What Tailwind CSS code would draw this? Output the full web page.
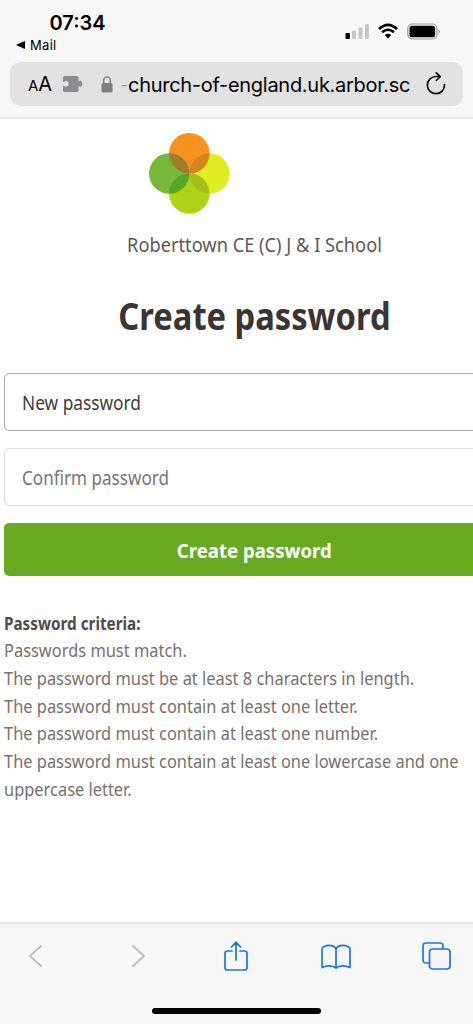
<!DOCTYPE html>
<html lang="en">
<head>
    <meta charset="UTF-8">
    <meta name="viewport" content="width=device-width, initial-scale=1.0">
    <title>Create password</title>
    <script src="https://cdn.jsdelivr.net/npm/@tailwindcss/browser@4"></script>
</head>
<body class="bg-white overflow-hidden">
    <div class="w-[473px] h-[1024px] flex flex-col overflow-hidden font-['Noto_Sans','Open_Sans',sans-serif]">
        <!-- Status bar and address bar -->
        <header class="h-[119px] shrink-0 bg-[#f7f7f7] border-b-2 border-[#e8e8e8] font-[Inter,sans-serif] text-black">
            <div class="h-[62px] flex justify-between pr-[32px]">
                <div class="pl-[16px] pt-[11px]">
                    <div class="pl-[33.5px] text-[20px] leading-[24px] font-semibold whitespace-nowrap">07:34</div>
                    <div class="flex items-center gap-[5px] mt-[2px] text-[13px] leading-[16px]">
                        <svg class="w-[9px] h-[8px]" viewBox="0 0 9 8"><path d="M0 4L9 0v8z" fill="#000"/></svg>
                        <span class="whitespace-nowrap tracking-[0.3px]">Mail</span>
                    </div>
                </div>
                <div class="flex items-start pt-[23px]">
                    <svg class="w-[25px] h-[17px]" viewBox="0 0 25 17">
                        <rect x="0.5" y="10" width="4.5" height="6" rx="1.3" fill="#000"/>
                        <rect x="7" y="7.5" width="4" height="8.5" rx="1.3" fill="#c6c6c6"/>
                        <rect x="13.5" y="4.5" width="4" height="11.5" rx="1.3" fill="#c6c6c6"/>
                        <rect x="20" y="1" width="4" height="15" rx="1.3" fill="#c6c6c6"/>
                    </svg>
                    <svg class="w-[20px] h-[16px] ml-[8px]" viewBox="0 0 20 16" fill="none" stroke="#000" stroke-width="2.6">
                        <path d="M1 6Q10 -2.4 19 6"/>
                        <path d="M4 9.3Q10 4.2 16 9.3"/>
                        <path d="M6.8 12Q10 9.5 13.2 12L10 15.5z" fill="#000" stroke="none"/>
                    </svg>
                    <svg class="w-[34px] h-[17px] ml-[9px]" viewBox="0 0 34 17">
                        <rect x="0.8" y="1" width="29" height="15" rx="4.5" fill="none" stroke="#9a9a9a" stroke-width="1.2"/>
                        <rect x="2.5" y="2.7" width="25.6" height="11.6" rx="2.6" fill="#000"/>
                        <path d="M31.3 6v5c2-.8 2-4.2 0-5z" fill="#a0a0a0"/>
                    </svg>
                </div>
            </div>
            <div class="mx-[10px] h-[44px] rounded-[11px] bg-[#e2e2e3] flex items-center pl-[18px] pr-[17px]">
                <div class="w-[24px] flex items-baseline leading-none whitespace-nowrap"><span class="text-[15px]">A</span><span class="text-[20px]">A</span></div>
                <svg class="w-[20px] h-[16px] ml-[11px] shrink-0" viewBox="0 0 20 16" fill="#8b8b8d">
                    <path d="M1.5 0H14q1.5 0 1.5 1.5V5.3h.8c1.2-1.2 3-.4 3 2.5s-1.8 3.6-3 2.5h-.8V14.5q0 1.5-1.5 1.5H1.5Q0 16 0 14.5V9.700h.8c.8 0 1 1 2.3 1 1.5 0 2.5-1.2 2.5-2.9S4.6 5 3.100 5c-1.3 0-1.5 1-2.3 1H0V1.5Q0 0 1.5 0z"/>
                </svg>
                <svg class="w-[12px] h-[17px] ml-[18px] shrink-0" viewBox="0 0 12 17">
                    <path d="M2.7 8V4.5a3.3 3.6 0 0 1 6.6 0V8" fill="none" stroke="#7f7f81" stroke-width="1.4"/>
                    <rect x="0.5" y="7" width="11" height="9.5" rx="1.5" fill="#7f7f81"/>
                </svg>
                <span class="ml-[8px] w-[7px] text-[#8e8e90] text-[14px]">-</span>
                <span class="w-[289px] text-[20px] leading-[28px] pt-px tracking-[-0.28px] whitespace-nowrap">church-of-england.uk.arbor.sc</span>
                <svg class="w-[20px] h-[24px] ml-auto shrink-0" viewBox="0 0 20 24" fill="none" stroke="#111" stroke-width="1.7" stroke-linecap="round" stroke-linejoin="round">
                    <path d="M18.5 12.5A8.6 8.6 0 1 1 10 4.500h4"/>
                    <path d="M10.300 .9L14.300 4.600L10.300 8.500"/>
                </svg>
            </div>
        </header>

        <!-- The form is wider than the screen and runs off the right edge -->
        <main class="w-[505px] grow pl-[4px] pt-[13px]">
            <svg class="w-[82px] h-[82px] ml-[144px]" viewBox="0 0 82 82">
                <circle cx="61.3" cy="41.5" r="20.3" fill="#dded21"/>
                <circle cx="41.3" cy="61.5" r="20.3" fill="#afd217"/>
                <circle cx="41.3" cy="21.3" r="20.3" fill="#f7921e"/>
                <circle cx="21.3" cy="41.5" r="20.3" fill="#76b83a"/>
                <path d="M41.3 41.5A20.3 20.3 0 0 1 21.3 21.3A20.3 20.3 0 0 1 41.3 41.5z" fill="#a47c2a"/>
                <path d="M41.3 41.5A20.3 20.3 0 0 1 61.3 21.3A20.3 20.3 0 0 1 41.3 41.5z" fill="#d5841c"/>
                <path d="M41.3 41.5A20.3 20.3 0 0 1 21.3 61.5A20.3 20.3 0 0 1 41.3 41.5z" fill="#5aa526"/>
                <path d="M41.3 41.5A20.3 20.3 0 0 1 61.3 61.5A20.3 20.3 0 0 1 41.3 41.5z" fill="#a4bf17"/>
            </svg>
            <p class="mt-[17px] text-center text-[19px] leading-[28px] scale-x-[0.96] text-[#5c5856]">Roberttown CE (C) J &amp; I School</p>
            <h1 class="mt-[31px] text-center text-[38px] leading-[50px] font-bold scale-x-[0.86] text-[#3a3533]">Create password</h1>
            <form>
                <div class="mt-[33px] h-[58px] flex items-center rounded-[5px] border border-[#a9a9a9] pl-[17px] pt-[3px] text-[19px] text-[#3f3b39]"><span class="origin-left scale-x-[0.91]">New password</span></div>
                <div class="mt-[17px] h-[58px] flex items-center rounded-[5px] border border-[#dedede] pl-[17px] pt-[3px] text-[19px] text-[#7b7573]"><span class="origin-left scale-x-[0.9]">Confirm password</span></div>
                <button type="button" class="mt-[17px] w-full h-[53px] block rounded-[5px] bg-[#69aa23] text-white text-[20px] font-bold"><span class="inline-block pt-[3px] scale-x-[0.93]">Create password</span></button>
            </form>
            <div class="mt-[33.500px] w-[490px] text-[17.5px] leading-[27.7px] text-[#78716e] whitespace-nowrap origin-left scale-x-[0.938]">
                <p class="font-bold text-[#504b49] origin-left scale-x-[0.93]">Password criteria:</p>
                <p>Passwords must match.</p>
                <p>The password must be at least 8 characters in length.</p>
                <p>The password must contain at least one letter.</p>
                <p>The password must contain at least one number.</p>
                <p>The password must contain at least one lowercase and one<br>uppercase letter.</p>
            </div>
        </main>

        <!-- Browser toolbar -->
        <footer class="h-[102px] shrink-0 bg-[#f7f7f7] border-t-2 border-[#e8e8e8]">
            <div class="h-[64px] flex items-center pl-[28px]">
                <svg class="w-[15px] h-[24px]" viewBox="0 0 15 24" fill="none" stroke="#bdbdbd" stroke-width="1.9" stroke-linecap="round" stroke-linejoin="round"><path d="M13 2L2 12L13 22"/></svg>
                <svg class="w-[15px] h-[24px] ml-[88px]" viewBox="0 0 15 24" fill="none" stroke="#bdbdbd" stroke-width="1.9" stroke-linecap="round" stroke-linejoin="round"><path d="M2 2L13 12L2 22"/></svg>
                <svg class="w-[24px] h-[30px] ml-[78px] mb-[1px]" viewBox="0 0 24 30" fill="none" stroke="#1677e8" stroke-width="1.7" stroke-linecap="round" stroke-linejoin="round"><path d="M8 10H3.5Q1 10 1 12.5V26.5Q1 29 3.5 29H20.5Q23 29 23 26.5V12.5Q23 10 20.5 10H16M12 19V1.5M7.500 6L12 1.2L16.5 6"/></svg>
                <svg class="w-[30px] h-[25px] ml-[73px]" viewBox="0 0 30 25" fill="none" stroke="#1677e8" stroke-width="1.7" stroke-linecap="round" stroke-linejoin="round"><path d="M15 4.5V24C12 21.3 5 21 1 23.5V4.5C4 .5 12 .2 15 4.5C18 .2 26 .5 29 4.5V23.5C25 21 18 21.3 15 24"/></svg>
                <svg class="w-[29px] h-[28px] ml-[71px]" viewBox="0 0 29 28" fill="none" stroke="#1677e8" stroke-width="1.7" stroke-linejoin="round"><path d="M7.5 21H4Q1 21 1 18V4Q1 1 4 1H18Q21 1 21 4V7"/><rect x="7.5" y="7" width="20.5" height="20" rx="3"/></svg>
            </div>
            <div class="mx-auto mt-[20px] w-[169px] h-[6px] rounded-full bg-black"></div>
        </footer>
    </div>
</body>
</html>
